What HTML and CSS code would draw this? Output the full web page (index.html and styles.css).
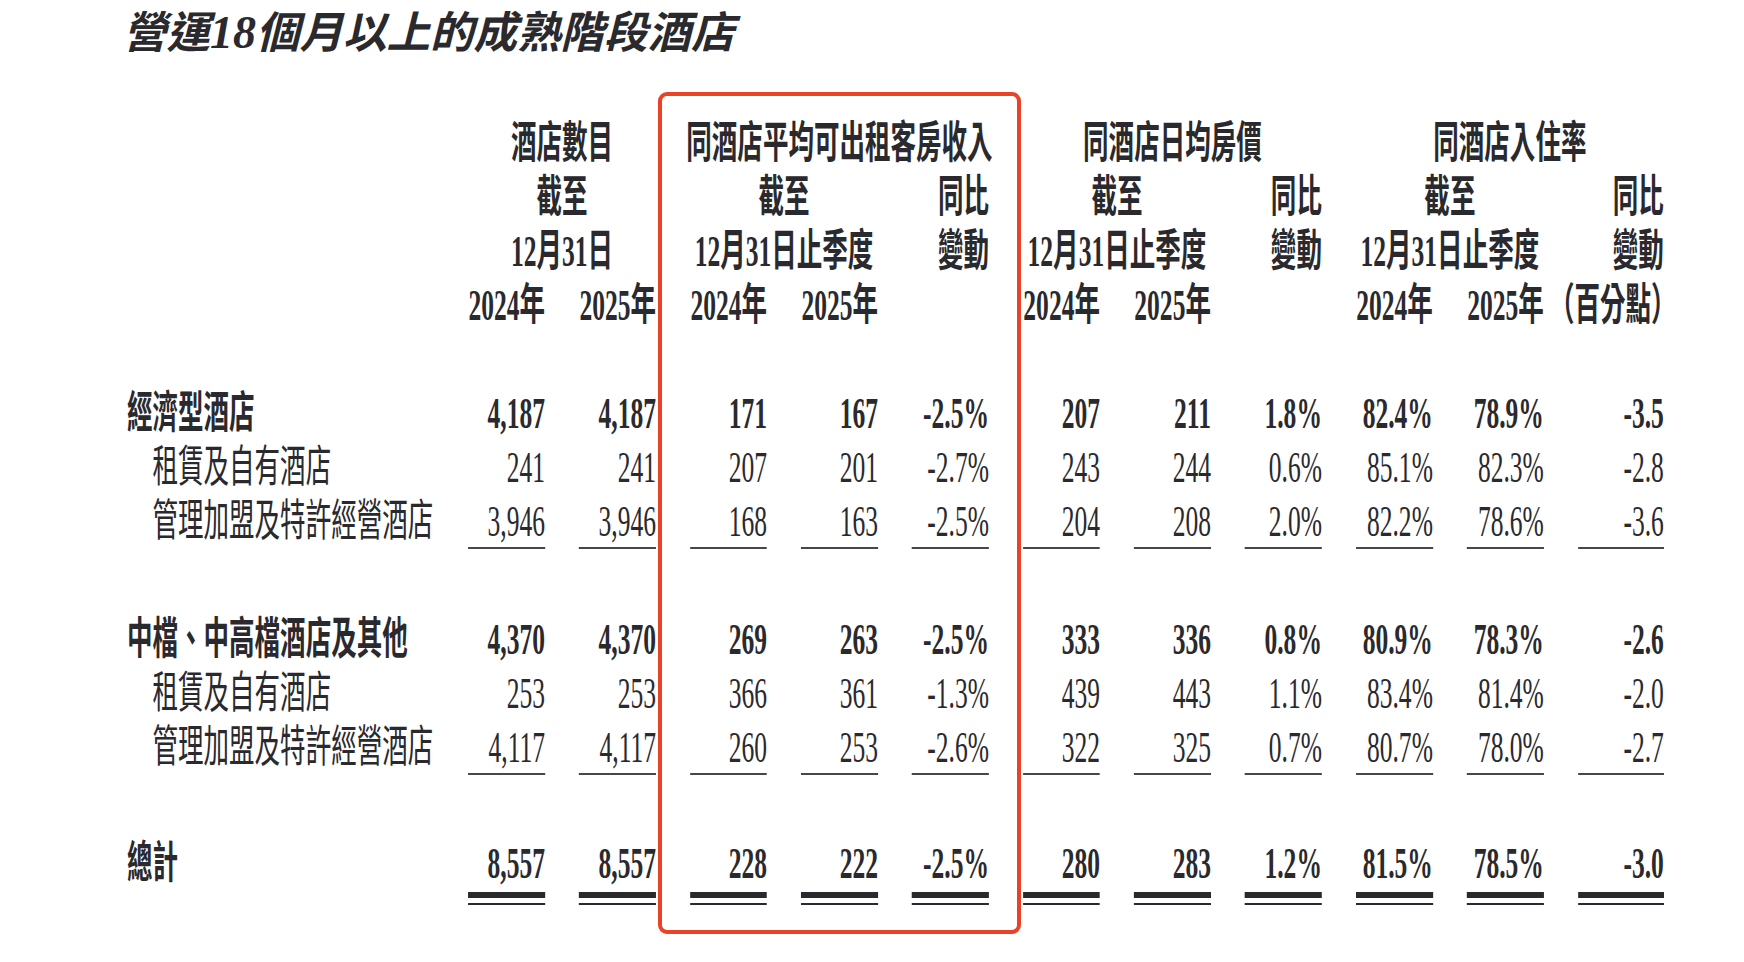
FILE: index.html
```html
<!DOCTYPE html>
<html lang="zh-Hant">
<head>
<meta charset="utf-8">
<title>營運18個月以上的成熟階段酒店</title>
<link rel="stylesheet" href="styles.css">
</head>
<body>
<div class="page">
  <h1 class="title">營運<span class="num">18</span>個月以上的成熟階段酒店</h1>

  <div class="table">
    <div class="thead">
      <div class="row head">
        <div class="cell"></div>
        <div class="cell center span2">酒店數目</div>
        <div class="cell center span3">同酒店平均可出租客房收入</div>
        <div class="cell center span3">同酒店日均房價</div>
        <div class="cell center span3">同酒店入住率</div>
      </div>
      <div class="row head">
        <div class="cell"></div>
        <div class="cell center span2">截至</div>
        <div class="cell center span2">截至</div>
        <div class="cell">同比</div>
        <div class="cell center span2">截至</div>
        <div class="cell">同比</div>
        <div class="cell center span2">截至</div>
        <div class="cell">同比</div>
      </div>
      <div class="row head">
        <div class="cell"></div>
        <div class="cell center span2">12月31日</div>
        <div class="cell center span2">12月31日止季度</div>
        <div class="cell">變動</div>
        <div class="cell center span2">12月31日止季度</div>
        <div class="cell">變動</div>
        <div class="cell center span2">12月31日止季度</div>
        <div class="cell">變動</div>
      </div>
      <div class="row head">
        <div class="cell"></div>
        <div class="cell">2024年</div>
        <div class="cell">2025年</div>
        <div class="cell">2024年</div>
        <div class="cell">2025年</div>
        <div class="cell"></div>
        <div class="cell">2024年</div>
        <div class="cell">2025年</div>
        <div class="cell"></div>
        <div class="cell">2024年</div>
        <div class="cell">2025年</div>
        <div class="cell halt">（百分點）</div>
      </div>
    </div>

    <div class="group first">
      <div class="row bold">
        <div class="cell label">經濟型酒店</div>
        <div class="cell">4,187</div><div class="cell">4,187</div>
        <div class="cell">171</div><div class="cell">167</div><div class="cell">-2.5%</div>
        <div class="cell">207</div><div class="cell">211</div><div class="cell">1.8%</div>
        <div class="cell">82.4%</div><div class="cell">78.9%</div><div class="cell">-3.5</div>
      </div>
      <div class="row">
        <div class="cell label sub">租賃及自有酒店</div>
        <div class="cell">241</div><div class="cell">241</div>
        <div class="cell">207</div><div class="cell">201</div><div class="cell">-2.7%</div>
        <div class="cell">243</div><div class="cell">244</div><div class="cell">0.6%</div>
        <div class="cell">85.1%</div><div class="cell">82.3%</div><div class="cell">-2.8</div>
      </div>
      <div class="row ruled">
        <div class="cell label sub">管理加盟及特許經營酒店</div>
        <div class="cell">3,946</div><div class="cell">3,946</div>
        <div class="cell">168</div><div class="cell">163</div><div class="cell">-2.5%</div>
        <div class="cell">204</div><div class="cell">208</div><div class="cell">2.0%</div>
        <div class="cell">82.2%</div><div class="cell">78.6%</div><div class="cell">-3.6</div>
      </div>
    </div>

    <div class="group second">
      <div class="row bold">
        <div class="cell label">中檔、中高檔酒店及其他</div>
        <div class="cell">4,370</div><div class="cell">4,370</div>
        <div class="cell">269</div><div class="cell">263</div><div class="cell">-2.5%</div>
        <div class="cell">333</div><div class="cell">336</div><div class="cell">0.8%</div>
        <div class="cell">80.9%</div><div class="cell">78.3%</div><div class="cell">-2.6</div>
      </div>
      <div class="row">
        <div class="cell label sub">租賃及自有酒店</div>
        <div class="cell">253</div><div class="cell">253</div>
        <div class="cell">366</div><div class="cell">361</div><div class="cell">-1.3%</div>
        <div class="cell">439</div><div class="cell">443</div><div class="cell">1.1%</div>
        <div class="cell">83.4%</div><div class="cell">81.4%</div><div class="cell">-2.0</div>
      </div>
      <div class="row ruled">
        <div class="cell label sub">管理加盟及特許經營酒店</div>
        <div class="cell">4,117</div><div class="cell">4,117</div>
        <div class="cell">260</div><div class="cell">253</div><div class="cell">-2.6%</div>
        <div class="cell">322</div><div class="cell">325</div><div class="cell">0.7%</div>
        <div class="cell">80.7%</div><div class="cell">78.0%</div><div class="cell">-2.7</div>
      </div>
    </div>

    <div class="group total">
      <div class="row bold totalrow">
        <div class="cell label">總計</div>
        <div class="cell">8,557</div><div class="cell">8,557</div>
        <div class="cell">228</div><div class="cell">222</div><div class="cell">-2.5%</div>
        <div class="cell">280</div><div class="cell">283</div><div class="cell">1.2%</div>
        <div class="cell">81.5%</div><div class="cell">78.5%</div><div class="cell">-3.0</div>
      </div>
    </div>
  </div>

  <div class="highlight"></div>
</div>
</body>
</html>
```

FILE: styles.css
```css
:root {
  --s: 0.58;
  --ink: #2a2a2e;
}

html, body {
  margin: 0;
  padding: 0;
  background: #ffffff;
}

body {
  font-family: "Liberation Serif", "Noto Sans CJK TC", serif;
  color: var(--ink);
}

.page {
  position: relative;
  width: 1744px;
  height: 962px;
  overflow: hidden;
}

.title {
  margin: 0;
  padding-left: 123px;
  height: 66px;
  font-size: 43.5px;
  line-height: 66px;
  font-weight: 700;
  font-style: italic;
}

.title .num {
  font-weight: 700;
  font-size: 46px;
}

.table {
  margin: 51px 0 0 127px;
  width: calc(1537px / var(--s));
  transform: scaleX(var(--s));
  transform-origin: 0 0;
  font-size: 44px;
}

.row {
  display: grid;
  grid-template-columns: calc(307px / var(--s)) repeat(10, calc(77px / var(--s))) calc(86px / var(--s));
  column-gap: calc(34px / var(--s));
  height: 54px;
  line-height: 54px;
}

.cell {
  display: flex;
  justify-content: flex-end;
  white-space: nowrap;
  box-sizing: border-box;
  height: 54px;
}

.head .cell {
  font-weight: 700;
}

.center {
  justify-content: center;
}

.span2 { grid-column: span 2; }
.span3 { grid-column: span 3; }

.halt {
  font-feature-settings: "halt" 1;
}

.label {
  justify-content: flex-start;
}

.sub {
  padding-left: 44px;
}

.bold {
  font-weight: 700;
}

.group.first { margin-top: 54px; }
.group.second { margin-top: 64px; }
.group.total { margin-top: 62px; }

.ruled .cell:not(.label) {
  border-bottom: 2px solid #46464b;
}

.totalrow {
  height: 68px;
}

.totalrow .cell {
  height: 68px;
  align-items: flex-start;
}

.totalrow .cell:not(.label) {
  background:
    linear-gradient(var(--ink), var(--ink)) left bottom 7px / 100% 6px no-repeat,
    linear-gradient(var(--ink), var(--ink)) left bottom 0 / 100% 2px no-repeat;
}

.highlight {
  position: absolute;
  left: 658px;
  top: 92px;
  width: 363px;
  height: 842px;
  box-sizing: border-box;
  border: 4px solid #ea4127;
  border-radius: 9px;
  pointer-events: none;
}
```
